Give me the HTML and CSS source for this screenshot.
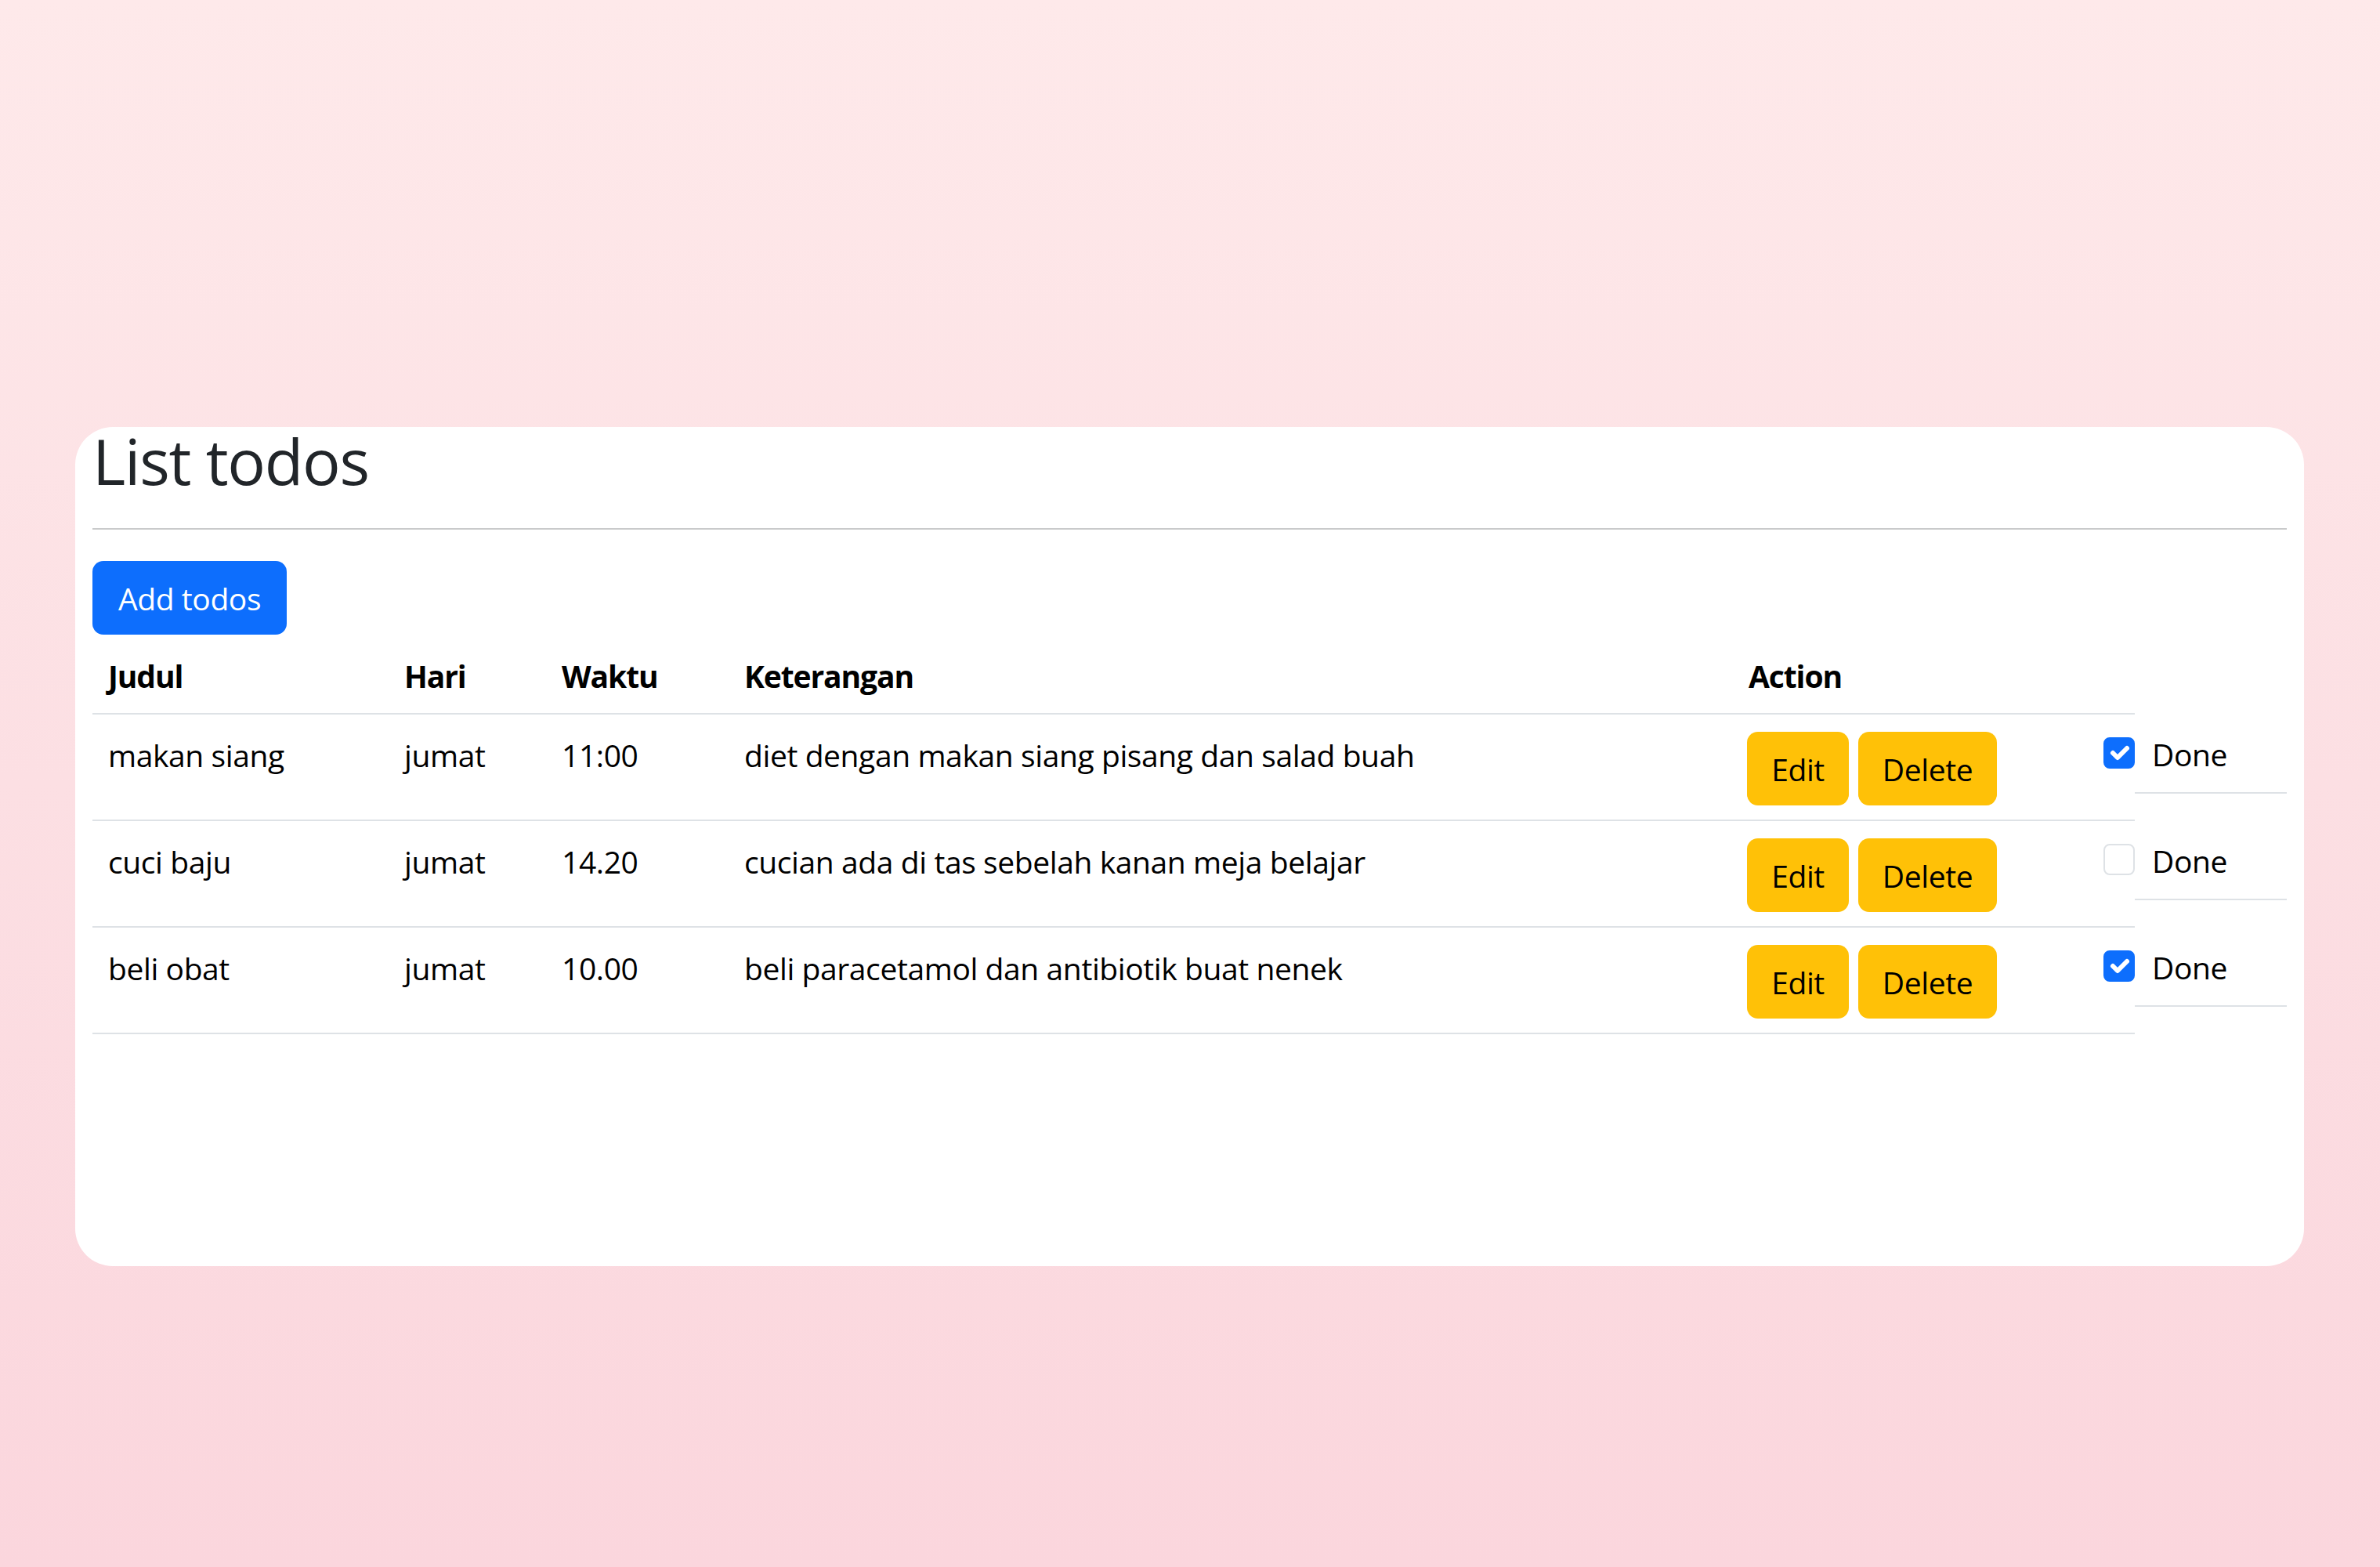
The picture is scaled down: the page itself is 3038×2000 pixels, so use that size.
FILE: index.html
```html
<!DOCTYPE html>
<html lang="id">
<head>
<meta charset="utf-8">
<title>List todos</title>
<link rel="stylesheet" href="styles.css">
</head>
<body>
<div class="page">
  <div class="card">
    <h1 class="title">List todos</h1>
    <hr class="divider">
    <button class="btn btn-primary btn-add">Add todos</button>
    <table class="todo-table">
      <colgroup>
        <col class="col-judul">
        <col class="col-hari">
        <col class="col-waktu">
        <col class="col-ket">
        <col class="col-action">
        <col class="col-done">
      </colgroup>
      <thead>
        <tr>
          <th>Judul</th>
          <th>Hari</th>
          <th>Waktu</th>
          <th>Keterangan</th>
          <th>Action</th>
          <th class="done-cell"></th>
        </tr>
      </thead>
      <tbody>
        <tr>
          <td>makan siang</td>
          <td>jumat</td>
          <td>11:00</td>
          <td>diet dengan makan siang pisang dan salad buah</td>
          <td><div class="action-group"><button class="btn btn-warning btn-edit">Edit</button><button class="btn btn-warning btn-delete">Delete</button></div></td>
          <td class="done-cell"><div class="done-item"><span class="check checked"><svg viewBox="0 0 20 20" class="tick"><path d="m6 10 3 3 6-6" fill="none" stroke="#fff" stroke-width="3" stroke-linecap="round" stroke-linejoin="round"/></svg></span><span class="done-label">Done</span></div></td>
        </tr>
        <tr>
          <td>cuci baju</td>
          <td>jumat</td>
          <td>14.20</td>
          <td>cucian ada di tas sebelah kanan meja belajar</td>
          <td><div class="action-group"><button class="btn btn-warning btn-edit">Edit</button><button class="btn btn-warning btn-delete">Delete</button></div></td>
          <td class="done-cell"><div class="done-item"><span class="check"></span><span class="done-label">Done</span></div></td>
        </tr>
        <tr>
          <td>beli obat</td>
          <td>jumat</td>
          <td>10.00</td>
          <td>beli paracetamol dan antibiotik buat nenek</td>
          <td><div class="action-group"><button class="btn btn-warning btn-edit">Edit</button><button class="btn btn-warning btn-delete">Delete</button></div></td>
          <td class="done-cell"><div class="done-item"><span class="check checked"><svg viewBox="0 0 20 20" class="tick"><path d="m6 10 3 3 6-6" fill="none" stroke="#fff" stroke-width="3" stroke-linecap="round" stroke-linejoin="round"/></svg></span><span class="done-label">Done</span></div></td>
        </tr>
      </tbody>
    </table>
  </div>
</div>
</body>
</html>
```
FILE: styles.css
```css
* { box-sizing: border-box; }

html, body { height: 100%; }

body {
  margin: 0;
  min-height: 100vh;
  background: linear-gradient(180deg, #fee9ea 0%, #fcdfe3 50%, #fbd6dd 100%);
  font-family: "Open Sans", "Noto Sans", "Liberation Sans", sans-serif;
  color: #212529;
}

.page {
  padding: 545px 97px 0 96px;
}

.card {
  background: #ffffff;
  border-radius: 48px;
  height: 1071px;
  padding: 2px 22px 0 22px;
}

.title {
  margin: 0;
  font-size: 81px;
  font-weight: 500;
  line-height: 81px;
  letter-spacing: -1.3px;
  color: #212529;
}

.divider {
  margin: 46px 0 0 0;
  border: 0;
  border-top: 2px solid #c9cacb;
  height: 0;
}

.btn {
  display: inline-flex;
  align-items: center;
  justify-content: center;
  height: 94px;
  padding: 0;
  border: 0;
  border-radius: 14px;
  font-family: inherit;
  font-size: 39px;
  line-height: 1;
  letter-spacing: -0.4px;
}

.btn-primary {
  background: #0d6efd;
  color: #ffffff;
}

.btn-add {
  width: 248px;
  margin-top: 40px;
}

.btn-warning {
  background: #ffc107;
  color: #000000;
}

.btn-edit { width: 130px; }
.btn-delete { width: 177px; }

.action-group {
  display: flex;
  gap: 12px;
  margin-left: -2px;
}

.todo-table {
  width: 100%;
  table-layout: fixed;
  border-collapse: collapse;
  margin-top: 0;
  color: #000000;
  font-size: 39px;
  letter-spacing: -0.4px;
}

.col-judul { width: 378px; }
.col-hari { width: 201px; }
.col-waktu { width: 233px; }
.col-ket { width: 1282px; }
.col-action { width: 513px; }
.col-done { width: 194px; }

.todo-table th,
.todo-table td {
  padding: 22px 20px 18px 20px;
  line-height: 60px;
  text-align: left;
  vertical-align: top;
  border-bottom: 2px solid #dee2e6;
  white-space: nowrap;
}

.todo-table th {
  font-weight: 700;
  letter-spacing: -1.1px;
  padding-top: 23px;
  padding-bottom: 17px;
}

.todo-table td {
  font-weight: 400;
}

.todo-table .done-cell {
  padding: 0;
  border-bottom: 0;
}

.done-item {
  display: flex;
  align-items: flex-start;
  padding: 22px 0 18px 0;
  border-bottom: 2px solid #dee2e6;
  line-height: 60px;
}

.check {
  flex: none;
  width: 40px;
  height: 40px;
  margin-top: 8px;
  margin-left: -40px;
  border-radius: 8px;
  border: 2px solid #dee2e6;
  background: #ffffff;
  display: flex;
  align-items: center;
  justify-content: center;
}

.check.checked {
  background: #0d6efd;
  border-color: #0d6efd;
}

.tick {
  width: 40px;
  height: 40px;
  flex: none;
}

.done-label {
  margin-left: 22px;
}
```
